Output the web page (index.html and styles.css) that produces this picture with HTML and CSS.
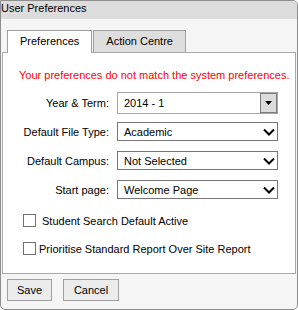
FILE: index.html
```html
<!DOCTYPE html>
<html>
<head>
<meta charset="utf-8">
<link rel="stylesheet" href="styles.css">
</head>
<body>
<div class="dialog">
  <div class="titlebar">User Preferences</div>
  <div class="tabs">
    <ul class="tabnav">
      <li class="tab active">Preferences</li>
      <li class="tab">Action Centre</li>
    </ul>
    <div class="panel">
      <p class="warning">Your preferences do not match the system preferences.</p>
      <div class="row row-year">
        <span class="lbl">Year &amp; Term:</span>
        <div class="combo">
          <span class="val">2014 - 1</span>
          <span class="dd"><svg width="7" height="4" viewBox="0 0 7 4"><polygon points="0,0 7,0 3.5,4" fill="#000"/></svg></span>
        </div>
      </div>
      <div class="row row-sel">
        <span class="lbl">Default File Type:</span>
        <div class="sel"><span class="val">Academic</span><svg class="chev" width="12" height="8" viewBox="0 0 12 8"><polyline points="1,1.5 6,6.5 11,1.5" fill="none" stroke="#000" stroke-width="2"/></svg></div>
      </div>
      <div class="row row-sel">
        <span class="lbl">Default Campus:</span>
        <div class="sel"><span class="val">Not Selected</span><svg class="chev" width="12" height="8" viewBox="0 0 12 8"><polyline points="1,1.5 6,6.5 11,1.5" fill="none" stroke="#000" stroke-width="2"/></svg></div>
      </div>
      <div class="row row-sel">
        <span class="lbl">Start page:</span>
        <div class="sel"><span class="val">Welcome Page</span><svg class="chev" width="12" height="8" viewBox="0 0 12 8"><polyline points="1,1.5 6,6.5 11,1.5" fill="none" stroke="#000" stroke-width="2"/></svg></div>
      </div>
      <div class="check check-first"><span class="box"></span><span class="ctext">Student Search Default Active</span></div>
      <div class="check check-second"><span class="box"></span><span class="ctext">Prioritise Standard Report Over Site Report</span></div>
    </div>
  </div>
  <div class="buttons">
    <button class="btn btn-save">Save</button>
    <button class="btn btn-cancel">Cancel</button>
  </div>
</div>
</body>
</html>
```
FILE: styles.css
```css
* { box-sizing: border-box; }
html, body { margin: 0; padding: 0; }
body {
  font-family: "Liberation Sans", Arial, sans-serif;
  font-size: 11px;
  color: #000;
  background: #fff;
}
.dialog {
  width: 298px;
  height: 310px;
  border: 1px solid #8e8e8e;
  border-radius: 0 5px 5px 5px;
  background: #f5f5f5;
  overflow: hidden;
}
.titlebar {
  height: 18px;
  background: #dcdcdc;
  line-height: 15px;
  padding-left: 0;
}
.tabs {
  margin: 0 1px;
  padding-top: 11px;
}
.tabnav {
  list-style: none;
  margin: 0;
  padding: 0 0 0 5px;
  height: 22px;
  display: flex;
  align-items: flex-start;
  gap: 1px;
}
.tab {
  height: 22px;
  border: 1px solid #a0a0a0;
  border-bottom: 0;
  padding: 0 12px;
  line-height: 21px;
  background: #dedede;
}
.tab.active {
  background: #fff;
  height: 23px;
  position: relative;
  z-index: 1;
}
.panel {
  border: 1px solid #a9a9a9;
  background: #fff;
  height: 222px;
}
.warning {
  margin: 15px 0 0 16px;
  color: #f00;
  line-height: 14px;
}
.row {
  display: flex;
  align-items: center;
}
.lbl {
  width: 106px;
  text-align: right;
  margin-right: 8px;
}
.row-year { margin-top: 10px; }
.row-sel { margin-top: 10px; }
.row-year + .row-sel { margin-top: 8px; }
.combo {
  width: 161px;
  height: 22px;
  border: 1px solid #a5a5a5;
  display: flex;
  align-items: center;
  padding-left: 6px;
  background: #fff;
}
.dd {
  margin-left: auto;
  width: 17px;
  height: 20px;
  border: 1px solid #7d7d7d;
  background: #dcdcdc;
  display: flex;
  align-items: center;
  justify-content: center;
}
.sel {
  width: 161px;
  height: 19px;
  border: 1px solid #767676;
  display: flex;
  align-items: center;
  padding-left: 6px;
  background: #fff;
}
.chev {
  margin-left: auto;
  margin-right: 2px;
}
.check {
  display: flex;
  align-items: center;
  margin-left: 20px;
  margin-top: 15px;
  height: 13px;
}
.box {
  width: 13px;
  height: 13px;
  border: 1px solid #707070;
  background: #fff;
}
.check-first .ctext { margin-left: 6px; }
.check-second .ctext { margin-left: 3px; }
.buttons {
  display: flex;
  gap: 11px;
  padding: 5px 0 0 6px;
}
.btn {
  font: inherit;
  color: #000;
  height: 22px;
  border: 1px solid #a0a0a0;
  background: #ececec;
  border-radius: 0;
  padding: 0;
}
.btn-save { width: 45px; }
.btn-cancel { width: 56px; }
```
